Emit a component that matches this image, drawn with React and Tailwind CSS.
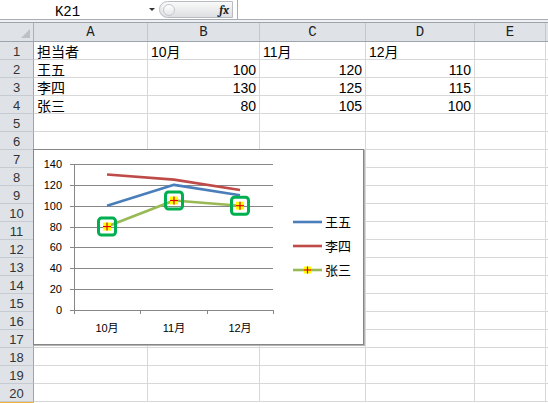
import React from 'react';

const colWidths = [114, 112, 106, 109, 71];
const colNames = ['A', 'B', 'C', 'D', 'E'];

const data = [
  ['担当者', '10月', '11月', '12月'],
  ['王五', 100, 120, 110],
  ['李四', 130, 125, 115],
  ['张三', 80, 105, 100],
];

const months = ['10月', '11月', '12月'];
const xs = [107, 174, 240];
const yOf = (v) => 310 - (v * 146) / 140;

const series = [
  { name: '王五', color: '#4a7ebb', values: [100, 120, 110] },
  { name: '李四', color: '#be4b48', values: [130, 125, 115] },
  { name: '张三', color: '#98b954', values: [80, 105, 100], marker: true },
];

const Marker = ({ x, y, size = 8 }) => (
  <g>
    <rect x={x - size / 2} y={y - size / 2} width={size} height={size} fill="#ffff00" />
    <line x1={x - size / 2} x2={x + size / 2} y1={y} y2={y} stroke="#e00000" strokeWidth="1.2" />
    <line x1={x} x2={x} y1={y - size / 2} y2={y + size / 2} stroke="#e00000" strokeWidth="1.2" />
  </g>
);

const Chart = () => (
  <div className="absolute left-[33px] top-[149px] w-[331px] h-[196px] border border-[#868686] bg-white shadow-[1px_1px_0_#b5b5b5]">
    <svg width="329" height="194" viewBox="34 150 329 194" className="block [font-family:'Liberation_Sans','Noto_Sans_CJK_SC',sans-serif]">
      {[0, 20, 40, 60, 80, 100, 120, 140].map((v) => (
        <g key={v}>
          {v > 0 && <line x1="74" x2="273" y1={Math.round(yOf(v)) + 0.5} y2={Math.round(yOf(v)) + 0.5} stroke="#878787" />}
          <line x1="70" x2="74" y1={Math.round(yOf(v)) + 0.5} y2={Math.round(yOf(v)) + 0.5} stroke="#878787" />
          <text x="62" y={Math.round(yOf(v)) + 4} fontSize="11" textAnchor="end" fill="#000">{v}</text>
        </g>
      ))}
      <line x1="74.5" x2="74.5" y1="164" y2="314" stroke="#878787" />
      <line x1="74" x2="274" y1="310.5" y2="310.5" stroke="#878787" />
      {[140, 207, 273].map((x) => (
        <line key={x} x1={x + 0.5} x2={x + 0.5} y1="310" y2="314" stroke="#878787" />
      ))}
      {months.map((m, i) => (
        <text key={m} x={xs[i]} y="332" fontSize="11" textAnchor="middle" fill="#000">{m}</text>
      ))}
      {series.map((s) => (
        <polyline
          key={s.name}
          points={s.values.map((v, i) => `${xs[i]},${yOf(v)}`).join(' ')}
          fill="none"
          stroke={s.color}
          strokeWidth="2.6"
          strokeLinejoin="round"
        />
      ))}
      {series[2].values.map((v, i) => (
        <g key={i}>
          <rect x={xs[i] - 8.5} y={yOf(v) - 8.5} width="17" height="17" rx="3" fill="none" stroke="#00b050" strokeWidth="3" />
          <Marker x={xs[i]} y={yOf(v)} />
        </g>
      ))}
      {series.map((s, i) => {
        const y = 222 + i * 24;
        return (
          <g key={s.name}>
            <line x1="293" x2="322" y1={y} y2={y} stroke={s.color} strokeWidth="2.6" />
            {s.marker && <Marker x={307.5} y={y} size={7} />}
            <text x="325" y={y + 5} fontSize="13" fill="#000">{s.name}</text>
          </g>
        );
      })}
    </svg>
  </div>
);

const TopBar = () => (
  <div className="flex h-[20px] border-b border-[#a7adb5] bg-white">
    <div className="w-[145px] text-center text-[14px] leading-[14px] pt-[5px] font-mono text-black pr-[10px]">K21</div>
    <div className="w-[14px] flex items-center justify-center">
      <div className="w-0 h-0 border-l-[3px] border-r-[3px] border-t-[3px] border-l-transparent border-r-transparent border-t-[#333]" />
    </div>
    <div className="mt-[1px] w-[74px] h-[17px] rounded-l-full rounded-r-[2px] border border-[#b9bdc3] bg-gradient-to-b from-[#fafafa] to-[#dedfe2] flex items-center">
      <div className="ml-[3px] w-[12px] h-[12px] rounded-full border border-[#c4c7cb] bg-gradient-to-b from-[#ffffff] to-[#e6e7e9]" />
      <div className="ml-auto mr-[3px] text-[12px] italic font-bold font-serif text-[#222] leading-none">fx</div>
    </div>
    <div className="ml-[4px] w-px h-full bg-[#a7adb5]" />
    <div className="flex-1" />
  </div>
);

const cellFont = "[font-family:'Liberation_Sans','Noto_Sans_CJK_SC',sans-serif]";

const App = () => {
  const rows = Array.from({ length: 20 }, (_, i) => i + 1);
  return (
    <div className="relative w-[548px] h-[403px] overflow-hidden bg-white">
      <TopBar />
      <div className="h-[2px] bg-[#eef0f3]" />
      {/* column headers */}
      <div className="flex h-[20px] border-t border-b border-[#9ea4ab] bg-[#dfe3e8]">
        <div className="relative w-[34px] shrink-0 border-r border-[#aab0b7]">
          <div className="absolute right-[3px] bottom-[3px] w-0 h-0 border-l-[9px] border-b-[9px] border-l-transparent border-b-[#bcc1c7]" />
        </div>
        {colWidths.map((w, i) => (
          <div
            key={colNames[i]}
            className="shrink-0 border-r border-[#c3c8ce] text-center text-[14px] leading-[17px] pt-[1px] text-[#222] font-mono"
            style={{ width: w }}
          >
            {colNames[i]}
          </div>
        ))}
        <div className="flex-1" />
      </div>
      {rows.map((r) => (
        <div key={r} className="flex h-[18px]">
          <div className={`w-[34px] shrink-0 h-[18px] border-r border-b border-r-[#9ea4ab] border-b-[#c6cbd1] bg-[#dfe3e8] text-center text-[13px] leading-[18px] pt-[1px] text-[#333] ${cellFont}`}>
            {r}
          </div>
          {colWidths.map((w, c) => {
            const v = data[r - 1] ? data[r - 1][c] : undefined;
            const isNum = typeof v === 'number';
            return (
              <div
                key={c}
                className={`shrink-0 h-[18px] overflow-hidden border-r border-b border-[#d8d8d8] text-[14px] leading-[18px] pt-[1px] text-black whitespace-nowrap ${cellFont} ${isNum ? 'text-right pr-[3px]' : 'text-left pl-[3px]'}`}
                style={{ width: w }}
              >
                {v}
              </div>
            );
          })}
          <div className="flex-1 h-[18px] border-b border-[#d8d8d8]" />
        </div>
      ))}
      <div className="flex h-[4px]">
        <div className="w-[34px] shrink-0 bg-[#f8d88f] border-t border-[#f2b23b]" />
        <div className="flex-1" />
      </div>
      <Chart />
    </div>
  );
};

export default App;
